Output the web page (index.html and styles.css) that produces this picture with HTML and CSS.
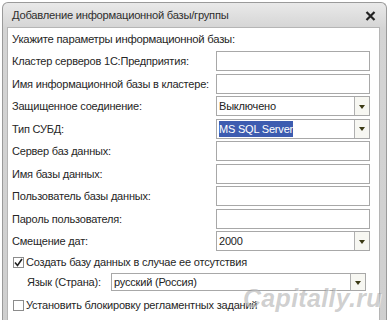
FILE: index.html
```html
<!DOCTYPE html>
<html lang="ru">
<head>
<meta charset="utf-8">
<link rel="stylesheet" href="styles.css">
</head>
<body>
<div class="window">
  <div class="titlebar">
    <span class="title">Добавление информационной базы/группы</span>
    <svg class="close" width="11" height="10" viewBox="0 0 11 10"><path d="M1.5 1 L9.5 9 M9.5 1 L1.5 9" stroke="#222" stroke-width="2.2"/></svg>
  </div>
  <div class="client">
    <div class="intro">Укажите параметры информационной базы:</div>
    <div class="form">
      <label>Кластер серверов 1С:Предприятия:</label><div class="field"></div>
      <label>Имя информационной базы в кластере:</label><div class="field"></div>
      <label>Защищенное соединение:</label><div class="field combo"><span class="val">Выключено</span><span class="btn"><i></i></span></div>
      <label>Тип СУБД:</label><div class="field combo"><span class="val"><span class="sel">MS SQL Server</span></span><span class="btn"><i></i></span></div>
      <label>Сервер баз данных:</label><div class="field"></div>
      <label>Имя базы данных:</label><div class="field"></div>
      <label>Пользователь базы данных:</label><div class="field"></div>
      <label>Пароль пользователя:</label><div class="field"></div>
      <label>Смещение дат:</label><div class="field combo"><span class="val">2000</span><span class="btn"><i></i></span></div>
    </div>
    <div class="check first"><span class="box"><svg width="9" height="9" viewBox="0 0 9 9"><path d="M1 4.5 L3.5 7.5 L8 1" fill="none" stroke="#222" stroke-width="1.6"/></svg></span>Создать базу данных в случае ее отсутствия</div>
    <div class="lang"><label>Язык (Страна):</label><div class="field combo"><span class="val">русский (Россия)</span><span class="btn"><i></i></span></div></div>
    <div class="check last"><span class="box"></span>Установить блокировку регламентных заданий</div>
  </div>
  <div class="watermark">Capitally.ru</div>
</div>
</body>
</html>
```
FILE: styles.css
```css
html, body { margin: 0; padding: 0; background: #fff; }
body { font-family: "Liberation Sans", Arial, sans-serif; font-size: 11px; letter-spacing: -0.2px; color: #262626; overflow: hidden; }
.window {
  position: relative;
  margin: 2px 2px 0 2px;
  width: 385px;
  height: 330px;
  border-radius: 6px 6px 0 0;
  background: linear-gradient(#e9e9e9, #d4d4d4 26px, #cfcfcf);
  border: 1px solid #9a9a9a;
  border-bottom: none;
  box-sizing: border-box;
  padding: 0 6px 0 4px;
}
.titlebar {
  height: 24px;
  display: flex;
  align-items: center;
  justify-content: space-between;
  padding: 0 4px 0 5px;
}
.title { color: #2e2e2e; font-size: 11.2px; letter-spacing: -0.25px; }
.close { margin-top: 1px; }
.client {
  background: #fff;
  border: 1px solid #b5b5b5;
  height: 300px;
  box-sizing: border-box;
  padding: 0 9px 0 4px;
}
.intro { height: 23px; line-height: 23px; margin-bottom: 0; font-size: 11.3px; letter-spacing: -0.25px; }
.form {
  display: grid;
  grid-template-columns: 204px 154px;
  grid-auto-rows: 20px;
  row-gap: 2.5px;
}
.form label { line-height: 20px; white-space: nowrap; }
.field {
  border: 1px solid #a8a8a8;
  box-sizing: border-box;
  background: #fff;
  height: 20px;
}
.combo { display: flex; }
.combo .val { flex: 1; padding-left: 2px; line-height: 18px; color: #222; }
.combo .btn {
  width: 14px;
  border-left: 1px solid #b0b0b0;
  background: #f7f7f2;
  display: flex;
  align-items: center;
  justify-content: center;
}
.combo .btn i {
  width: 0; height: 0;
  border-left: 3.5px solid transparent;
  border-right: 3.5px solid transparent;
  border-top: 4px solid #3b3a14;
  margin-top: 1px;
}
.sel { background: #3d5cb0; color: #fff; padding: 2px 0; }
.check { display: flex; align-items: center; height: 20px; }
.check.first { margin-top: 1px; }
.check.last { margin-top: 3px; }
.box {
  width: 11px; height: 11px;
  border: 1px solid #8c8c8c;
  box-sizing: border-box;
  margin: 0 2px 0 1px;
  display: flex; align-items: center; justify-content: center;
  background: #fff;
}
.lang { display: grid; grid-template-columns: 99px 255px; align-items: center; height: 20px; margin-top: 0; }
.lang label { padding-left: 15px; }
.lang .field { height: 18px; }
.lang .val { line-height: 16px; }
.watermark {
  position: absolute;
  left: 240px; top: 281px;
  font-size: 25px; font-weight: bold; font-style: italic;
  color: rgba(140,140,140,0.42);
  text-shadow: 1px 1px 0 rgba(255,255,255,0.5);
  letter-spacing: 0.3px;
}
```
